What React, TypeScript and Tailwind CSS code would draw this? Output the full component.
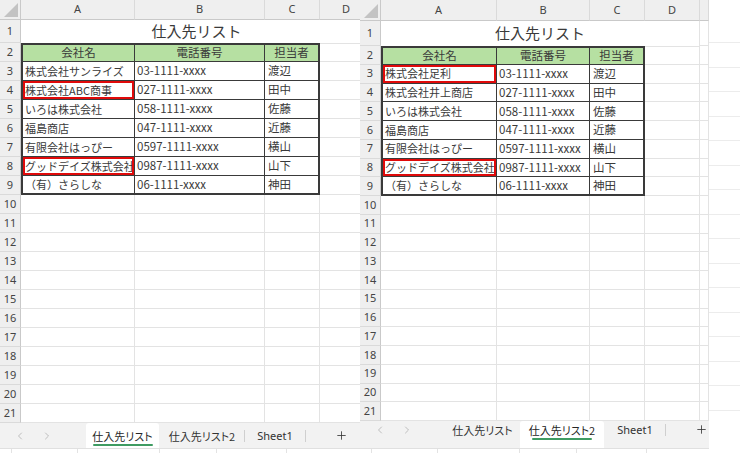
import { ChevronLeft, ChevronRight, Plus } from "lucide-react";

type Row = [string, string, string];

const jp = "font-['Noto_Sans_CJK_JP','Noto_Sans',sans-serif]";
const ui = "font-['Noto_Sans','Noto_Sans_CJK_JP',sans-serif]";

const leftRows: Row[] = [
  ["株式会社サンライズ", "03-1111-xxxx", "渡辺"],
  ["株式会社ABC商事", "027-1111-xxxx", "田中"],
  ["いろは株式会社", "058-1111-xxxx", "佐藤"],
  ["福島商店", "047-1111-xxxx", "近藤"],
  ["有限会社はっぴー", "0597-1111-xxxx", "横山"],
  ["グッドデイズ株式会社", "0987-1111-xxxx", "山下"],
  ["（有）さらしな", "06-1111-xxxx", "神田"],
];

const rightRows: Row[] = [
  ["株式会社足利", "03-1111-xxxx", "渡辺"],
  ["株式会社井上商店", "027-1111-xxxx", "田中"],
  ["いろは株式会社", "058-1111-xxxx", "佐藤"],
  ["福島商店", "047-1111-xxxx", "近藤"],
  ["有限会社はっぴー", "0597-1111-xxxx", "横山"],
  ["グッドデイズ株式会社", "0987-1111-xxxx", "山下"],
  ["（有）さらしな", "06-1111-xxxx", "神田"],
];

const head = ["会社名", "電話番号", "担当者"];
const rowNums = Array.from({ length: 21 }, (_, i) => i + 1);

/* ---------- one cell of the grid ---------- */
function Cell({ r, c, text, marked }: { r: number; c: number; text?: string; marked?: boolean }) {
  const inTable = r >= 2 && r <= 9 && c <= 2;
  if (!inTable) {
    const top = r === 2 && c === 3 ? "border-t border-t-[#e3e3e3]" : "";
    return <div className={`border-r border-b border-[#e3e3e3] ${top}`} />;
  }
  const cls = [
    "relative flex items-center overflow-hidden whitespace-nowrap border-[#3a3a3a] text-[#3a3a3a]",
    c === 0 && r > 2 ? "text-[11px]" : "text-[11.5px]",
    c === 0 ? "border-l-2" : "",
    c === 2 ? "border-r-2" : "border-r",
    r === 9 ? "border-b-2" : "border-b",
    r === 2 ? "border-t-2 bg-[#b6e0a2] justify-center" : "pl-[2px]",
  ].join(" ");
  return (
    <div className={cls}>
      <span className={c === 2 && r > 2 ? "pl-[1px]" : ""}>{text}</span>
      {marked && <span className="absolute inset-[-1px] border-[3px] border-[#e00a0a]" />}
    </div>
  );
}

/* ---------- sheet tabs along the bottom ---------- */
function TabBar({ active, pt, width }: { active: number; pt: string; width: string }) {
  const tabs = ["仕入先リスト", "仕入先リスト2", "Sheet1"];
  const widths = ["w-[73px]", "w-[84px]", "w-[60px]"];
  return (
    <div className={`flex flex-1 flex-col ${width}`}>
      <div className="flex flex-1 bg-[#f2f2f2]">
        <div className={`flex w-[86px] items-start text-[#a8a8a8] ${pt}`}>
          <ChevronLeft size={12} strokeWidth={1.4} className="ml-[14px] mt-[1px]" />
          <ChevronRight size={12} strokeWidth={1.4} className="ml-[15px] mt-[1px]" />
        </div>
        {tabs.map((t, i) => (
          <div key={t} className="flex">
            <div
              className={`flex ${widths[i]} flex-col items-center ${pt} ${
                i === active ? "rounded-t-[3px] bg-white text-[#262626]" : "text-[#333]"
              }`}
            >
              <span className={`${i === 2 ? ui : jp} text-[11px] leading-[14px] [font-feature-settings:'palt']`}>
                {t}
              </span>
              {i === active && <span className="mt-[1px] h-[2px] w-[60px] rounded-full bg-[#3f9b62]" />}
            </div>
            {i !== active && i + 1 !== active ? (
              <div className={`w-px ${pt}`}>
                <div className="mt-[1px] h-[12px] w-px bg-[#cfcfcf]" />
              </div>
            ) : (
              <div className="w-px" />
            )}
          </div>
        ))}
        <div className={`flex items-start ${pt}`}>
          <Plus size={13} strokeWidth={1.5} className="ml-[29px] text-[#333]" />
        </div>
      </div>
      <div className="flex h-[5px] border-t border-[#e0e0e0] bg-white">
        <div className="w-[12px] border-r border-[#e3e3e3]" />
        <div className="w-[66px] border-r border-[#e3e3e3]" />
        <div className="w-[82px] border-r border-[#e3e3e3]" />
        <div className="w-[57px] border-r border-[#e3e3e3]" />
        <div className="w-[70px] border-r border-[#e3e3e3]" />
      </div>
    </div>
  );
}

/* ---------- one Excel window ---------- */
function Sheet({
  rows,
  marks,
  active,
  gridCols,
  gridRows,
  labels,
  width,
  pt,
}: {
  rows: Row[];
  marks: number[];
  active: number;
  gridCols: string;
  gridRows: string;
  labels: string[];
  width: string;
  pt: string;
}) {
  return (
    <div className={`flex h-full shrink-0 flex-col overflow-hidden ${width}`}>
      <div className={`grid shrink-0 ${gridCols} ${gridRows}`}>
        {/* column header */}
        <div className="relative border-r border-b border-[#c9c9c9] bg-[#efefef]">
          <svg className="absolute right-[2px] bottom-[2px]" width="14" height="14" viewBox="0 0 14 14">
            <polygon points="14,0 14,14 0,14" fill="#c3c3c3" />
          </svg>
        </div>
        {labels.map((l, i) => (
          <div
            key={i}
            className={`flex items-center justify-center border-r border-b border-r-[#dadada] border-b-[#c9c9c9] bg-[#efefef] text-[11px] text-[#444] ${ui}`}
          >
            {l}
          </div>
        ))}

        {rowNums.map((r) => {
          const rowHead = (
            <div
              key={`h${r}`}
              className={`flex items-center justify-center border-r border-b border-r-[#c9c9c9] border-b-[#dadada] bg-[#efefef] text-[11px] text-[#444] ${ui}`}
            >
              {r}
            </div>
          );
          if (r === 1) {
            return [
              rowHead,
              <div
                key="title"
                className={`col-span-4 flex items-center justify-center border-r border-[#e3e3e3] text-[15px] text-[#3a3a3a] ${jp}`}
              >
                仕入先リスト
              </div>,
              ...labels.slice(4).map((_, i) => <div key={`1e${i}`} className="border-r border-b border-[#e3e3e3]" />),
            ];
          }
          const data = r === 2 ? head : r <= 9 ? rows[r - 3] : undefined;
          return [
            rowHead,
            ...labels.map((_, c) => (
              <Cell
                key={`${r}-${c}`}
                r={r}
                c={c}
                text={data && c <= 2 ? data[c] : undefined}
                marked={c === 0 && marks.includes(r)}
              />
            )),
          ];
        })}
      </div>
      <TabBar active={active} pt={pt} width={width} />
    </div>
  );
}

export default function App() {
  return (
    <div className={`flex h-[453px] w-[740px] overflow-hidden bg-white ${jp}`}>
      <Sheet
        rows={leftRows}
        marks={[4, 8]}
        active={0}
        gridCols="grid-cols-[21px_114px_130px_55px_53px_40px]"
        gridRows="grid-rows-[20px_23px_repeat(20,19px)]"
        labels={["A", "B", "C", "D", ""]}
        width="w-[360px]"
        pt="pt-[6px]"
      />
      <Sheet
        rows={rightRows}
        marks={[3, 8]}
        active={1}
        gridCols="grid-cols-[21px_116px_93px_55px_55px_9px]"
        gridRows="grid-rows-[21px_25px_repeat(20,18.75px)]"
        labels={["A", "B", "C", "D", ""]}
        width="w-[349px]"
        pt="pt-[2px]"
      />
      {/* strip of the window behind */}
      <div className="flex w-[31px] flex-col bg-white">
        <div className="h-[18.5px] shrink-0" />
        {Array.from({ length: 16 }, (_, i) => (
          <div key={i} className="h-[24.5px] shrink-0 border-b border-[#ececec]" />
        ))}
      </div>
    </div>
  );
}
